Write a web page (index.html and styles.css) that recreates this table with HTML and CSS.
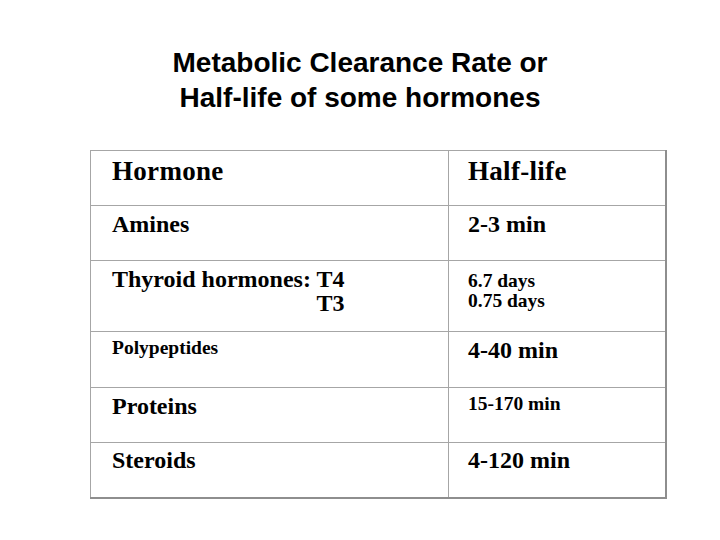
FILE: index.html
```html
<!DOCTYPE html>
<html>
<head>
<meta charset="utf-8">
<link rel="stylesheet" href="styles.css">
</head>
<body>
<div class="slide">
  <h1 class="title">Metabolic Clearance Rate or<br>Half-life of some hormones</h1>
  <table class="grid">
    <tr class="r1">
      <td class="c1 big">Hormone</td>
      <td class="c2 big">Half-life</td>
    </tr>
    <tr class="r2">
      <td class="c1 md">Amines</td>
      <td class="c2 md">2-3 min</td>
    </tr>
    <tr class="r3">
      <td class="c1 md"><div class="stack"><div>Thyroid hormones: T4</div><div>T3</div></div></td>
      <td class="c2 sm two">6.7 days<br>0.75 days</td>
    </tr>
    <tr class="r4">
      <td class="c1 sm">Polypeptides</td>
      <td class="c2 md">4-40 min</td>
    </tr>
    <tr class="r5">
      <td class="c1 md">Proteins</td>
      <td class="c2 sm">15-170 min</td>
    </tr>
    <tr class="r6">
      <td class="c1 md last">Steroids</td>
      <td class="c2 md last">4-120 min</td>
    </tr>
  </table>
</div>
</body>
</html>
```
FILE: styles.css
```css
html, body {
  margin: 0;
  padding: 0;
  background: #ffffff;
}

.slide {
  width: 720px;
  height: 540px;
  padding-top: 45px;
  box-sizing: border-box;
}

.title {
  margin: 0;
  font-family: "Liberation Sans", Arial, sans-serif;
  font-weight: bold;
  font-size: 28px;
  line-height: 35px;
  text-align: center;
  color: #000;
}

.grid {
  margin: 35px 0 0 90px;
  border-collapse: collapse;
  font-family: "Liberation Serif", "Times New Roman", serif;
  font-weight: bold;
  color: #000;
}

.grid td {
  border: 1px solid #a6a6a6;
  vertical-align: top;
  padding: 6px 0 0 0;
  box-sizing: border-box;
}

.grid .c1 {
  width: 358px;
  padding-left: 21px;
}

.grid .c2 {
  width: 217px;
  padding-left: 19px;
  border-right: 2px solid #8e8e8e;
}

.grid .last {
  border-bottom: 2px solid #8e8e8e;
}

.r1 { height: 55px; }
.r2 { height: 55px; }
.r3 { height: 71px; }
.r4 { height: 56px; }
.r5 { height: 55px; }
.r6 { height: 55px; }

.big {
  font-size: 27px;
  line-height: 27px;
  letter-spacing: 0.3px;
}

.grid .big { padding-top: 7px; }

.md {
  font-size: 24px;
  line-height: 24px;
}

.sm {
  font-size: 19.5px;
  line-height: 20px;
}

.stack {
  display: inline-flex;
  flex-direction: column;
  align-items: flex-end;
  gap: 0;
  line-height: 24px;
}

.grid .two { padding-top: 10px; }

.r6 td { padding-top: 5px; }
```
